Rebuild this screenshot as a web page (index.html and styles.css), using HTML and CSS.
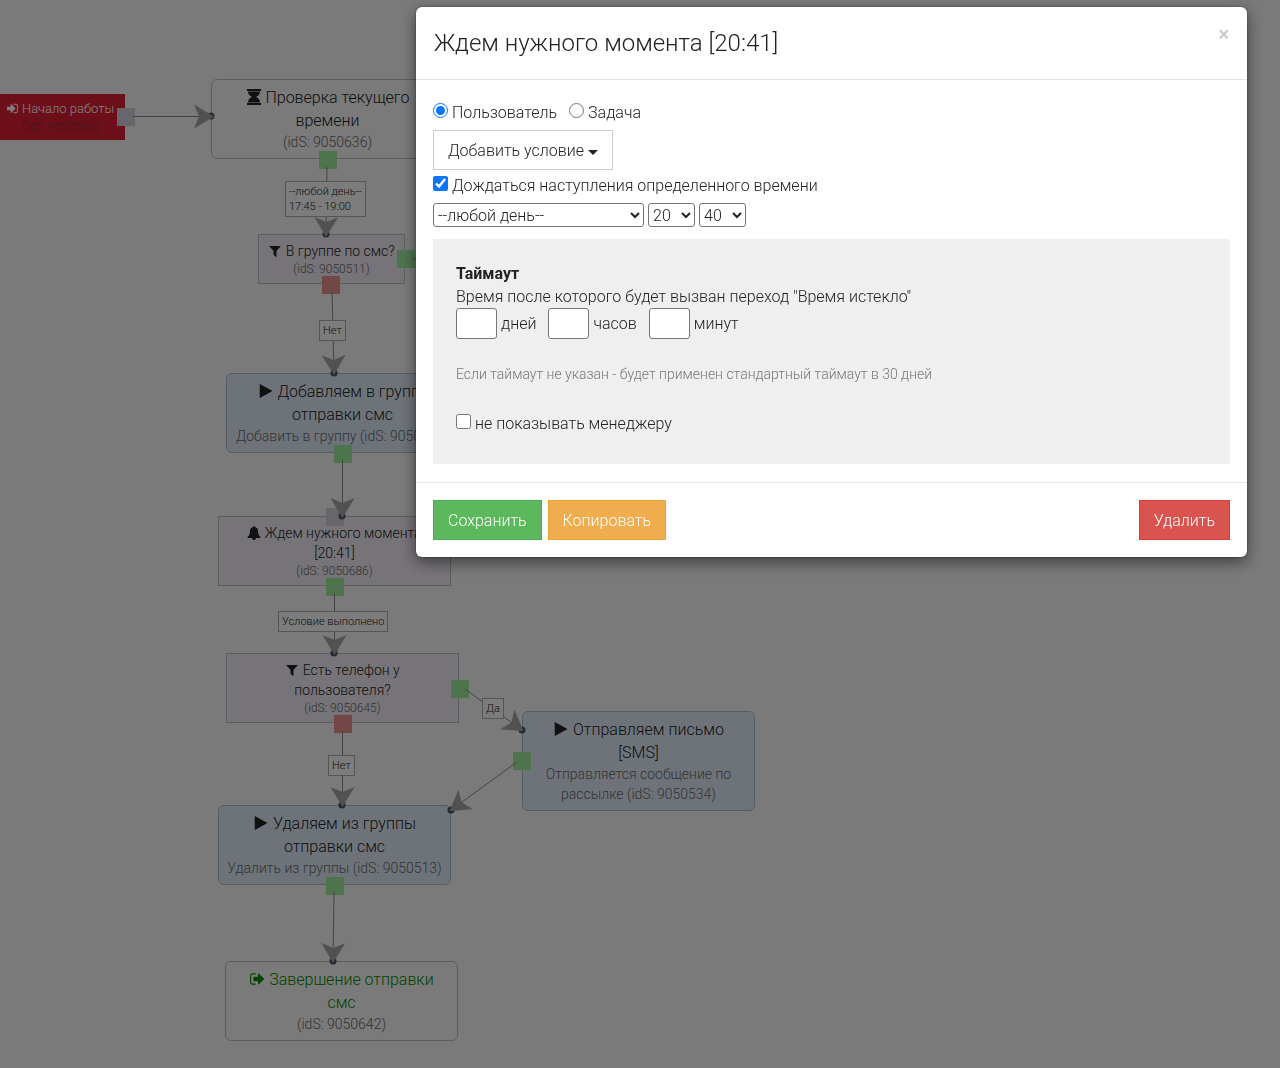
FILE: index.html
```html
<!DOCTYPE html>
<html lang="ru">
<head>
    <meta charset="UTF-8">
    <meta name="viewport" content="width=device-width, initial-scale=1.0">
    <title>Ждем нужного момента [20:41]</title>
    <link rel="stylesheet" href="styles.css">
</head>
<body>
    <!-- icons -->
    <svg class="sprite" aria-hidden="true">
        <symbol id="i-play" viewBox="192 0 1408 1792"><path d="M1576 927l-1328 738q-23 13-39.5 3t-16.5-36v-1472q0-26 16.5-36t39.5 3l1328 738q23 13 23 31t-23 31z"/></symbol>
        <symbol id="i-filter" viewBox="192 0 1408 1792"><path d="M1595 295q17 41-14 70l-493 493v742q0 42-39 59-13 5-25 5-27 0-45-19l-256-256q-19-19-19-45v-486l-493-493q-31-29-14-70 17-39 59-39h1280q42 0 59 39z"/></symbol>
        <symbol id="i-bell" viewBox="0 0 1792 1792"><path d="M1728 1408q0 52-38 90t-90 38h-448q0 106-75 181t-181 75-181-75-75-181h-448q-52 0-90-38t-38-90q50-42 91-88t85-119.5 74.5-158.5 50-206 19.5-260q0-152 117-282.5t307-158.5q-8-19-8-39 0-40 28-68t68-28 68 28 28 68q0 20-8 39 190 28 307 158.5t117 282.5q0 139 19.5 260t50 206 74.5 158.5 85 119.5 91 88z"/></symbol>
        <symbol id="i-in" viewBox="128 0 1536 1792"><path d="M1312 896q0 26-19 45l-544 544q-19 19-45 19t-45-19-19-45v-288h-448q-26 0-45-19t-19-45v-384q0-26 19-45t45-19h448v-288q0-26 19-45t45-19 45 19l544 544q19 19 19 45zm352-352v704q0 119-84.500 203.500t-203.500 84.500h-320q-13 0-22.500-9.500t-9.500-22.500q0-4-1-20t-.5-26.500 3-23.500 10-19.500 20.500-6.500h320q66 0 113-47t47-113v-704q0-66-47-113t-113-47h-312l-11.500-1-11.500-3-8-5.500-7-9-2-13.500q0-4-1-20t-.5-26.500 3-23.500 10-19.500 20.500-6.500h320q119 0 203.500 84.500t84.500 203.500z"/></symbol>
        <symbol id="i-out" viewBox="64 0 1568 1792"><path d="M704 1440q0 4 1 20t.5 26.500-3 23.500-10 19.500-20.500 6.500h-320q-119 0-203.500-84.500t-84.500-203.500v-704q0-119 84.500-203.500t203.500-84.500h320q13 0 22.500 9.500t9.500 22.500q0 4 1 20t.5 26.500-3 23.500-10 19.500-20.500 6.500h-320q-66 0-113 47t-47 113v704q0 66 47 113t113 47h312l11.500 1 11.500 3 8 5.500 7 9 2 13.500zm928-544q0 26-19 45l-544 544q-19 19-45 19t-45-19-19-45v-288h-448q-26 0-45-19t-19-45v-384q0-26 19-45t45-19h448v-288q0-26 19-45t45-19 45 19l544 544q19 19 19 45z"/></symbol>
        <symbol id="i-hourglass" viewBox="0 0 14 16"><path d="M0 0h14v2H0zM0 14h14v2H0zM1 2.600h12C13 5.500 11 7 9 8c2 1 4 2.500 4 5.400H1C1 10.500 3 9 5 8 3 7 1 5.500 1 2.600z"/></symbol>
    </svg>

    <main class="flow">
        <section class="node start">
            <h3><svg class="icon"><use href="#i-in"/></svg> Начало работы</h3>
            <p>(idS: 9050505)</p>
        </section>
        <section class="node big timer">
            <h3><svg class="icon"><use href="#i-hourglass"/></svg> Проверка текущего<br>времени</h3>
            <p>(idS: 9050636)</p>
        </section>
        <section class="node check in-group">
            <h3><svg class="icon"><use href="#i-filter"/></svg> В группе по смс?</h3>
            <p>(idS: 9050511)</p>
        </section>
        <section class="node big action add-group">
            <h3><svg class="icon"><use href="#i-play"/></svg> Добавляем в группу<br>отправки смс</h3>
            <p>Добавить в группу (idS: 9050512)</p>
        </section>
        <section class="node check wait">
            <h3><svg class="icon"><use href="#i-bell"/></svg> Ждем нужного момента<br>[20:41]</h3>
            <p>(idS: 9050686)</p>
        </section>
        <section class="node check has-phone">
            <h3><svg class="icon"><use href="#i-filter"/></svg> Есть телефон у<br>пользователя?</h3>
            <p>(idS: 9050645)</p>
        </section>
        <section class="node big action send">
            <h3><svg class="icon"><use href="#i-play"/></svg> Отправляем письмо<br>[SMS]</h3>
            <p>Отправляется сообщение по<br>рассылке (idS: 9050534)</p>
        </section>
        <section class="node big action del-group">
            <h3><svg class="icon"><use href="#i-play"/></svg> Удаляем из группы<br>отправки смс</h3>
            <p>Удалить из группы (idS: 9050513)</p>
        </section>
        <section class="node big end">
            <h3><svg class="icon"><use href="#i-out"/></svg> Завершение отправки<br>смс</h3>
            <p>(idS: 9050642)</p>
        </section>

        <!-- connectors -->
        <svg class="edges" aria-hidden="true">
            <defs>
                <marker id="arrow" viewBox="-20 -12 20 24" refX="-2" refY="0" markerWidth="20" markerHeight="24" markerUnits="userSpaceOnUse" orient="auto">
                    <path d="M0 0L-20 -12L-15 0L-20 12z"/>
                </marker>
            </defs>
            <g class="ports">
                <rect class="idle" x="117" y="108" width="18" height="18"/>
                <rect class="yes" x="319" y="151" width="18" height="18"/>
                <rect class="yes" x="397" y="250" width="18" height="18"/>
                <rect class="no" x="322" y="276" width="18" height="18"/>
                <rect class="yes" x="334" y="445" width="18" height="18"/>
                <rect class="idle" x="326" y="508" width="18" height="18"/>
                <rect class="yes" x="326" y="578" width="18" height="18"/>
                <rect class="yes" x="451" y="680" width="18" height="18"/>
                <rect class="no" x="334" y="715" width="18" height="18"/>
                <rect class="yes" x="513" y="752" width="18" height="18"/>
                <rect class="yes" x="326" y="877" width="18" height="18"/>
            </g>
            <g class="dots">
                <circle cx="211" cy="116" r="3.500"/>
                <circle cx="326" cy="234" r="3.500"/>
                <circle cx="334" cy="373" r="3.500"/>
                <circle cx="342" cy="516" r="3.500"/>
                <circle cx="334" cy="653" r="3.500"/>
                <circle cx="522" cy="730" r="3.500"/>
                <circle cx="342" cy="805" r="3.500"/>
                <circle cx="451" cy="810" r="3.500"/>
                <circle cx="333" cy="961" r="3.500"/>
            </g>
            <g class="lines">
                <path d="M133 116.500H212"/>
                <path d="M327 167L326 235"/>
                <path d="M412 259H440"/>
                <path d="M332 291L334 373"/>
                <path d="M342.500 460V516"/>
                <path d="M334.500 593V653"/>
                <path d="M465 689L522 730"/>
                <path d="M342.500 731V805"/>
                <path d="M517 762L451 810"/>
                <path d="M334 892L333 961"/>
            </g>
        </svg>

        <div class="tag tag-day">--любой день--<br>17:45 - 19:00</div>
        <div class="tag tag-no1">Нет</div>
        <div class="tag tag-done">Условие выполнено</div>
        <div class="tag tag-yes">Да</div>
        <div class="tag tag-no2">Нет</div>
    </main>

    <div class="backdrop">
        <form class="modal" role="dialog" aria-labelledby="modal-title">
            <header class="modal-header">
                <h2 id="modal-title">Ждем нужного момента [20:41]</h2>
                <button type="button" class="close" aria-label="Закрыть">×</button>
            </header>
            <div class="modal-body">
                <div class="row kinds">
                    <label><input type="radio" name="kind" checked> Пользователь</label>
                    <label><input type="radio" name="kind"> Задача</label>
                </div>
                <button type="button" class="btn btn-default">Добавить условие <span class="caret"></span></button>
                <div class="row"><label><input type="checkbox" checked> Дождаться наступления определенного времени</label></div>
                <div class="row selects">
                    <select class="day" aria-label="День"><option>--любой день--</option></select>
                    <select aria-label="Часы"><option>20</option></select>
                    <select aria-label="Минуты"><option>40</option></select>
                </div>
                <div class="timeout">
                    <strong>Таймаут</strong>
                    <p>Время после которого будет вызван переход "Время истекло"</p>
                    <div class="row units">
                        <label><input type="text"> дней</label>
                        <label><input type="text"> часов</label>
                        <label><input type="text"> минут</label>
                    </div>
                    <p class="hint">Если таймаут не указан - будет применен стандартный таймаут в 30 дней</p>
                    <label><input type="checkbox"> не показывать менеджеру</label>
                </div>
            </div>
            <footer class="modal-footer">
                <button type="submit" class="btn btn-success">Сохранить</button>
                <button type="button" class="btn btn-warning">Копировать</button>
                <button type="button" class="btn btn-danger">Удалить</button>
            </footer>
        </form>
    </div>
</body>
</html>
```

FILE: styles.css
```css
* {
    box-sizing: border-box;
}

body {
    margin: 0;
    font-family: Roboto, "Noto Sans", sans-serif;
    font-size: 16px;
    font-weight: 300;
    line-height: 23px;
    color: #222;
    background: #f4f4f4;
}

h2, h3, p {
    margin: 0;
    font-weight: inherit;
}

.sprite {
    position: absolute;
    width: 0;
    height: 0;
}

.icon {
    width: 1em;
    height: 1em;
    fill: currentColor;
    vertical-align: -2px;
}

/* Flow chart */
.flow {
    position: relative;
    min-height: 100vh;
    overflow: hidden;
}

.node {
    position: absolute;
    width: 233px;
    padding: 6px 0;
    border: 1px solid #bbb;
    font-size: 12px;
    line-height: 16px;
    text-align: center;
    white-space: nowrap;
    color: #666;
}

.node h3 {
    font-size: 14px;
    line-height: 20px;
    color: #222;
}

.node.big {
    border-radius: 6px;
    font-size: 14px;
    line-height: 20px;
}

.node.big h3 {
    font-size: 16px;
    line-height: 23px;
}

.node.check {
    background: #ede8f0;
}

.node.action {
    background: #dce7f4;
    border-color: #a9b9c9;
}

.node.start {
    left: -5px;
    top: 94px;
    width: 130px;
    padding: 4px 0;
    background: #d81e30;
    border-color: #d81e30;
    color: #8c2c36;
}

.node.start h3 {
    font-size: 13px;
    color: #fff;
}

.node.end h3 {
    color: #080;
}

.timer { left: 211px; top: 79px; }
.node.in-group { left: 258px; top: 234px; width: 147px; }
.add-group { left: 226px; top: 373px; }
.wait { left: 218px; top: 516px; }
.has-phone { left: 226px; top: 653px; }
.send { left: 522px; top: 711px; }
.del-group { left: 218px; top: 805px; }
.end { left: 225px; top: 961px; }

.edges {
    position: absolute;
    left: 0;
    top: 0;
    width: 100%;
    height: 100%;
}

.lines path {
    fill: none;
    stroke: #888;
    marker-end: url(#arrow);
}

#arrow path {
    fill: #a2a2a2;
    stroke: none;
}

.dots { fill: #456; }
.yes { fill: #9de89d; }
.no { fill: #e88f8f; }
.idle { fill: #d0cdd6; }

.tag {
    position: absolute;
    padding: 2px 3px;
    border: 1px solid #aaa;
    background: #f8f8f8;
    font-size: 11px;
    line-height: 15px;
    white-space: nowrap;
}

.tag-day { left: 285px; top: 181px; }
.tag-no1 { left: 319px; top: 320px; }
.tag-done { left: 278px; top: 611px; }
.tag-yes { left: 482px; top: 698px; }
.tag-no2 { left: 328px; top: 755px; }

/* Modal */
.backdrop {
    position: fixed;
    inset: 0;
    background: rgba(0, 0, 0, 0.5);
}

.modal {
    margin: 7px 33px 0 32.5%;
    border-radius: 6px;
    background: #fff;
    box-shadow: 0 5px 15px rgba(0, 0, 0, 0.5), 0 0 2px rgba(0, 0, 0, 0.5);
}

.modal-header {
    display: flex;
    justify-content: space-between;
    align-items: flex-start;
    padding: 18px;
    border-bottom: 1px solid #e5e5e5;
}

.modal-header h2 {
    font-size: 24px;
    line-height: 36px;
}

.close {
    padding: 0;
    border: 0;
    background: none;
    font: 700 20px/18px Roboto, sans-serif;
    color: #ccc;
}

.modal-body {
    padding: 20px 17px 18px;
}

.row {
    display: flex;
    min-height: 24px;
}

.kinds {
    gap: 12px;
    margin-bottom: 6px;
}

label {
    display: inline-flex;
    align-items: center;
    gap: 4px;
}

input[type="radio"],
input[type="checkbox"] {
    width: 15px;
    height: 15px;
    margin: 0 0 4px;
    accent-color: #0a75ff;
}

.btn {
    height: 40px;
    padding: 0 14px;
    border: 1px solid;
    font: inherit;
    color: #fff;
}

.btn-default {
    margin-bottom: 3px;
    border-color: #ccc;
    background: #fff;
    color: #222;
}

.caret {
    display: inline-block;
    border: 5px solid transparent;
    border-top-color: #222;
    border-bottom: 0;
    vertical-align: 1px;
}

.selects {
    gap: 4px;
    margin: 6px 0 12px;
}

select {
    width: 47px;
    height: 24px;
    padding: 0;
    border: 1px solid #767676;
    border-radius: 3px;
    background: #fff;
    font: inherit;
    color: #222;
}

select.day {
    width: 211px;
}

.timeout {
    padding: 23px 23px 29px;
    background: #efefef;
}

.timeout strong {
    font-weight: 700;
}

.units {
    gap: 12px;
}

.units input {
    width: 41px;
    height: 31px;
    border: 1px solid #767676;
    border-radius: 3px;
    background: #fff;
}

.hint {
    margin: 24px 0 26px;
    font-size: 14px;
    color: #777;
}

.modal-footer {
    display: flex;
    gap: 6px;
    padding: 17px;
    border-top: 1px solid #e5e5e5;
}

.btn-success {
    border-color: #4cae4c;
    background: #5cb85c;
}

.btn-warning {
    border-color: #eea236;
    background: #f0ad4e;
}

.btn-danger {
    margin-left: auto;
    border-color: #d43f3a;
    background: #d9534f;
}
```
